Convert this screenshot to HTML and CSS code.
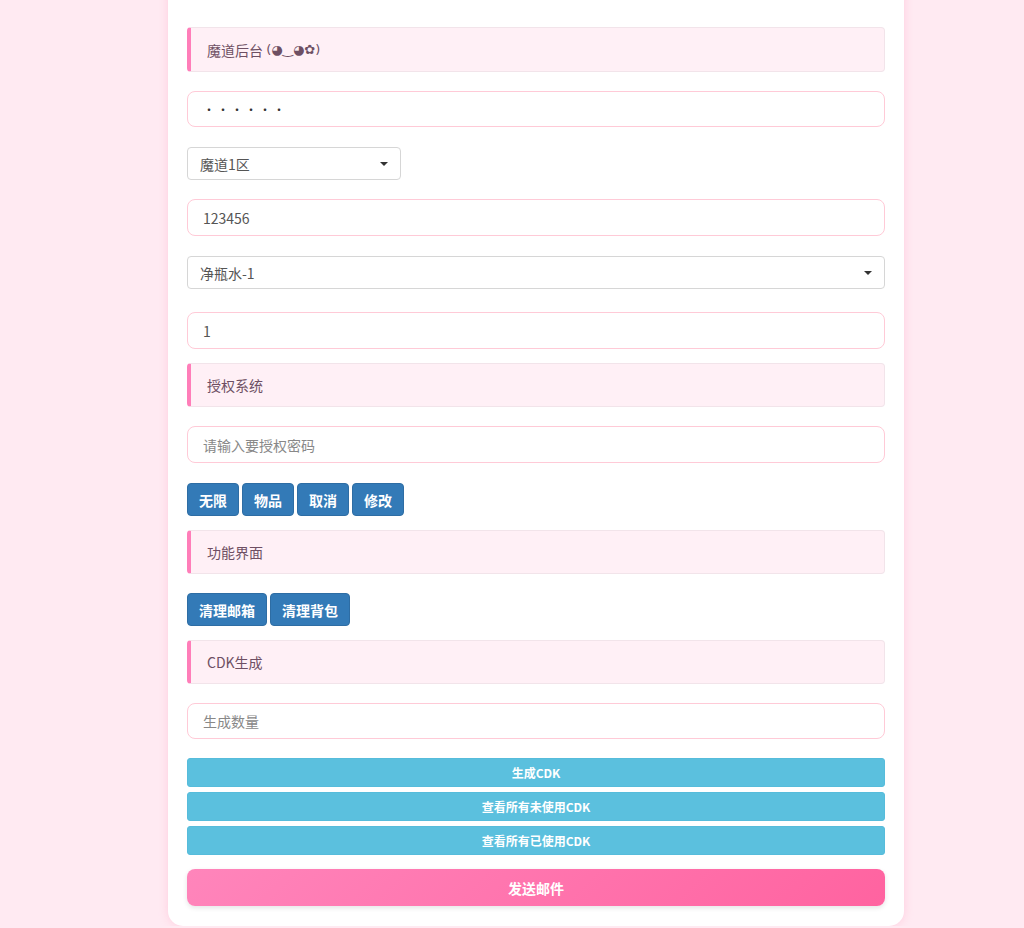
FILE: index.html
```html
<!DOCTYPE html>
<html lang="zh">
<head>
    <meta charset="UTF-8">
    <meta name="viewport" content="width=device-width, initial-scale=1.0">
    <title>魔道后台</title>
    <link rel="stylesheet" href="styles.css">
</head>
<body>
    <div class="panel">
        <div class="title first">魔道后台&nbsp;<span class="kaomoji">(◕‿◕✿)</span></div>
        <input type="password" class="field" value="123456" />

        <div class="select small">
            <span>魔道1区</span>
            <span class="caret"></span>
        </div>

        <input type="text" class="field" value="123456" />

        <div class="select wide">
            <span>净瓶水-1</span>
            <span class="caret"></span>
        </div>

        <input type="text" class="field before-title" value="1" />

        <div class="title">授权系统</div>
        <input type="text" class="field" placeholder="请输入要授权密码" />

        <div class="btn-row">
            <button class="btn">无限</button>
            <button class="btn">物品</button>
            <button class="btn">取消</button>
            <button class="btn">修改</button>
        </div>

        <div class="title">功能界面</div>
        <div class="btn-row">
            <button class="btn">清理邮箱</button>
            <button class="btn">清理背包</button>
        </div>

        <div class="title">CDK生成</div>
        <input type="text" class="field short-gap" placeholder="生成数量" />

        <button class="btn-info">生成CDK</button>
        <button class="btn-info">查看所有未使用CDK</button>
        <button class="btn-info last">查看所有已使用CDK</button>

        <button class="btn-send">发送邮件</button>
    </div>
</body>
</html>
```

FILE: styles.css
```css
body {
    margin: 0;
    background-color: #ffeaf2;
    font-family: "Noto Sans CJK SC", "Noto Sans", sans-serif;
    font-size: 14px;
    color: #555;
}

.panel {
    width: 736px;
    box-sizing: border-box;
    margin: -20px 0 0 168px;
    padding: 47px 19px 20px;
    background-color: #fff;
    border-radius: 15px;
    box-shadow: 0 0 10px rgba(255, 170, 200, 0.45);
}

.title {
    height: 44px;
    box-sizing: border-box;
    display: flex;
    align-items: center;
    padding-left: 16px;
    margin-bottom: 19px;
    background-color: #fff0f6;
    border: 1px solid #f2e4ea;
    border-left: 4px solid #ff7eb9;
    border-radius: 4px;
    color: #6e4f63;
    font-size: 14px;
}

.title.first {
    height: 45px;
}

.kaomoji {
    font-family: "DejaVu Sans", sans-serif;
    font-size: 13px;
}

.field {
    display: block;
    width: 100%;
    height: 37px;
    box-sizing: border-box;
    margin: 0 0 20px;
    padding: 0 15px;
    border: 1px solid #ffcad7;
    border-radius: 8px;
    font-family: inherit;
    font-size: 14px;
    color: #555;
    background: #fff;
    outline: none;
}

.field::placeholder {
    color: #888;
}

.field[type="password"] {
    height: 36px;
    letter-spacing: 2px;
    font-size: 12px;
    color: #333;
}

.field.before-title {
    margin-bottom: 14px;
}

.field.short-gap {
    height: 36px;
    margin-bottom: 19px;
}

.select {
    display: flex;
    align-items: center;
    justify-content: space-between;
    box-sizing: border-box;
    padding: 0 12px;
    border: 1px solid #d6d6d6;
    border-radius: 4px;
    color: #555;
    background: #fff;
}

.select.small {
    width: 214px;
    height: 33px;
    margin-bottom: 19px;
}

.select.wide {
    height: 33px;
    margin-bottom: 23px;
}

.caret {
    width: 0;
    height: 0;
    border-left: 4px solid transparent;
    border-right: 4px solid transparent;
    border-top: 4px solid #333;
}

.btn-row {
    display: flex;
    gap: 3px;
    margin-bottom: 14px;
}

.btn {
    height: 33px;
    padding: 0 11px;
    background-color: #337ab7;
    color: #fff;
    border: 1px solid #2e6da4;
    border-radius: 4px;
    font-family: inherit;
    font-size: 14px;
    font-weight: bold;
}

.btn-info {
    display: block;
    width: 100%;
    height: 29px;
    margin-bottom: 5px;
    background-color: #5bc0de;
    color: #fff;
    border: 1px solid #56bcdb;
    border-radius: 3px;
    font-family: inherit;
    font-size: 12px;
    font-weight: bold;
}

.btn-info.last {
    margin-bottom: 14px;
}

.btn-send {
    display: block;
    width: 100%;
    height: 37px;
    background: linear-gradient(135deg, #ff85bb, #ff63a0);
    color: #fff;
    border: none;
    border-radius: 8px;
    font-family: inherit;
    font-size: 14px;
    font-weight: bold;
    box-shadow: 0 2px 5px rgba(0, 0, 0, 0.1);
}
```
